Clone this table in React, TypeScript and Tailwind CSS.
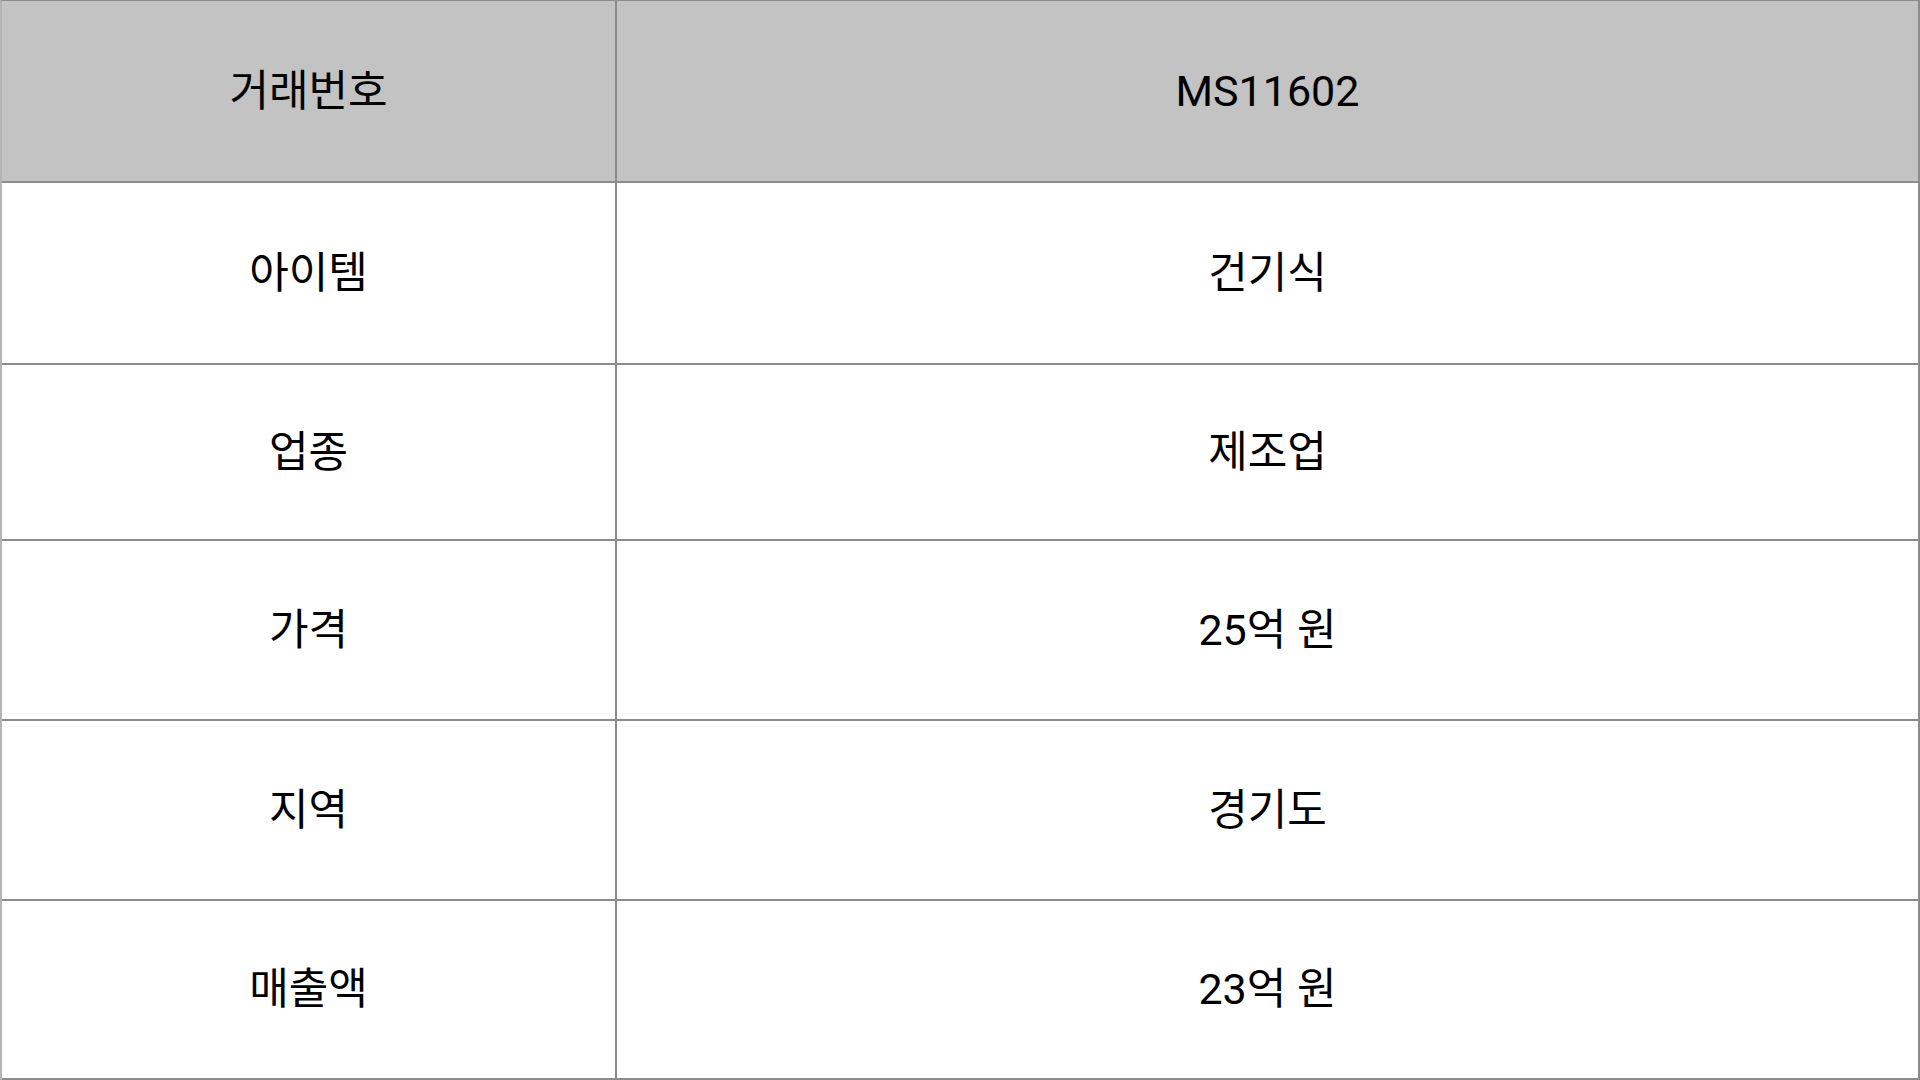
const rows: { label: string; value: string; height: string }[] = [
  { label: '아이템', value: '건기식', height: 'h-[182px]' },
  { label: '업종', value: '제조업', height: 'h-[176px]' },
  { label: '가격', value: '25억 원', height: 'h-[180px]' },
  { label: '지역', value: '경기도', height: 'h-[180px]' },
  { label: '매출액', value: '23억 원', height: 'h-[179px]' },
];

function Cell({
  children,
  className = '',
}: {
  children: React.ReactNode;
  className?: string;
}) {
  return (
    <div
      className={`flex items-center justify-center border-r-2 border-b-2 border-[#8c8c8c] ${className}`}
    >
      {children}
    </div>
  );
}

export default function App() {
  return (
    <div className="h-[1080px] w-[1920px] overflow-hidden bg-white font-['Roboto','Noto_Sans_CJK_KR',sans-serif] text-[43px] text-black [font-feature-settings:'palt']">
      <div className="grid grid-cols-[615px_1fr] border-t border-l-2 border-t-[#8c8c8c] border-l-[#b4b4b4]">
        <Cell className="h-[182px] bg-[#c3c3c3]">거래번호</Cell>
        <Cell className="h-[182px] bg-[#c3c3c3]">MS11602</Cell>
        {rows.map((row) => (
          <div key={row.label} className="contents">
            <Cell className={row.height}>{row.label}</Cell>
            <Cell className={row.height}>{row.value}</Cell>
          </div>
        ))}
      </div>
    </div>
  );
}
